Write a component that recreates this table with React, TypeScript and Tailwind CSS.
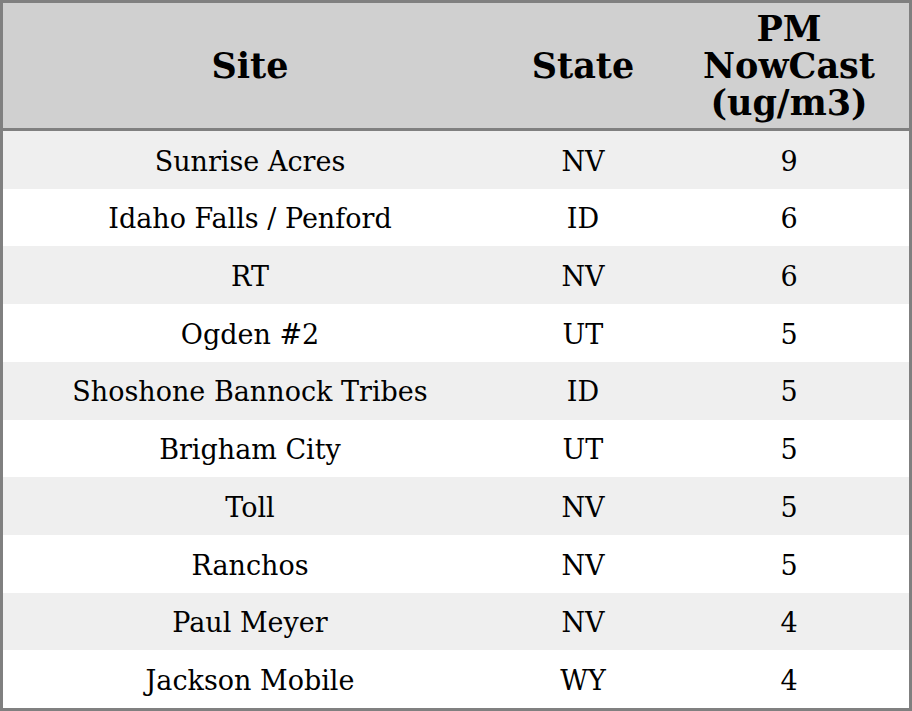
import React from "react";

const rows = [
  { site: "Sunrise Acres", state: "NV", pm: "9" },
  { site: "Idaho Falls / Penford", state: "ID", pm: "6" },
  { site: "RT", state: "NV", pm: "6" },
  { site: "Ogden #2", state: "UT", pm: "5" },
  { site: "Shoshone Bannock Tribes", state: "ID", pm: "5" },
  { site: "Brigham City", state: "UT", pm: "5" },
  { site: "Toll", state: "NV", pm: "5" },
  { site: "Ranchos", state: "NV", pm: "5" },
  { site: "Paul Meyer", state: "NV", pm: "4" },
  { site: "Jackson Mobile", state: "WY", pm: "4" },
];

const App: React.FC = () => {
  return (
    <div
      className="w-[912px] h-[711px] border-[3px] border-[#808080] bg-white text-black flex flex-col"
      style={{ fontFamily: '"DejaVu Serif", serif' }}
    >
      <div className="h-[128px] bg-[#d0d0d0] border-b-[3px] border-[#808080] flex items-center text-[35px] font-bold leading-[37px] text-center">
        <div className="w-[494px]">Site</div>
        <div className="w-[172px]">State</div>
        <div className="flex-1">
          PM
          <br />
          NowCast
          <br />
          (ug/m3)
        </div>
      </div>
      <div className="flex-1 flex flex-col">
        {rows.map((r, i) => (
          <div
            key={i}
            className={
              "flex-1 flex items-center pt-1 text-center text-[27px] " +
              (i % 2 === 0 ? "bg-[#efefef]" : "bg-white")
            }
          >
            <div className="w-[494px]">{r.site}</div>
            <div className="w-[172px]">{r.state}</div>
            <div className="flex-1">{r.pm}</div>
          </div>
        ))}
      </div>
    </div>
  );
};

export default App;
